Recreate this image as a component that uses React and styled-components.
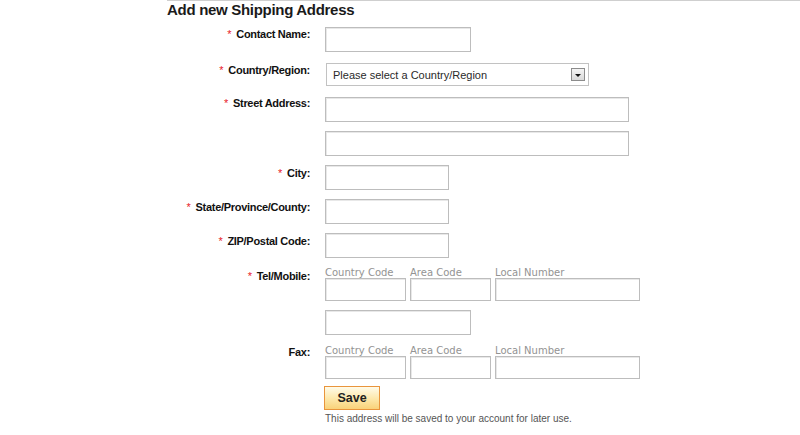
import React from 'react';
import styled, { createGlobalStyle } from 'styled-components';

const GlobalStyle = createGlobalStyle`
  body {
    margin: 0;
    background: #ffffff;
    font-family: "Liberation Sans", Arial, sans-serif;
  }
`;

const App = () => {
  return (
    <>
      <GlobalStyle />
      <Page>
        <Title>Add new Shipping Address</Title>
        <Form onSubmit={(e) => e.preventDefault()}>
          <Row $mt={8}>
            <Label><Star>*</Star>Contact Name:</Label>
            <Field>
              <TextInput $w={146} />
            </Field>
          </Row>

          <Row $mt={11}>
            <Label><Star>*</Star>Country/Region:</Label>
            <Field>
              <Select>
                <span>Please select a Country/Region</span>
                <Arrow />
              </Select>
            </Field>
          </Row>

          <Row $mt={11}>
            <Label $pt={0}><Star>*</Star>Street Address:</Label>
            <Field $gap={9}>
              <TextInput $w={304} />
              <TextInput $w={304} />
            </Field>
          </Row>

          <Row $mt={9}>
            <Label $pt={2}><Star>*</Star>City:</Label>
            <Field>
              <TextInput $w={124} />
            </Field>
          </Row>

          <Row $mt={9}>
            <Label $pt={2}><Star>*</Star>State/Province/County:</Label>
            <Field>
              <TextInput $w={124} />
            </Field>
          </Row>

          <Row $mt={9}>
            <Label $pt={2}><Star>*</Star>ZIP/Postal Code:</Label>
            <Field>
              <TextInput $w={124} />
            </Field>
          </Row>

          <Row $mt={10}>
            <Label $pt={2}><Star>*</Star>Tel/Mobile:</Label>
            <Field $gap={9}>
              <PhoneGroup>
                <PhonePart>
                  <SubLabel>Country Code</SubLabel>
                  <TextInput $w={81} $h={23} />
                </PhonePart>
                <PhonePart>
                  <SubLabel>Area Code</SubLabel>
                  <TextInput $w={81} $h={23} />
                </PhonePart>
                <PhonePart>
                  <SubLabel>Local Number</SubLabel>
                  <TextInput $w={145} $h={23} />
                </PhonePart>
              </PhoneGroup>
              <TextInput $w={146} />
            </Field>
          </Row>

          <Row $mt={11}>
            <Label $pt={0}>Fax:</Label>
            <Field>
              <PhoneGroup>
                <PhonePart>
                  <SubLabel>Country Code</SubLabel>
                  <TextInput $w={81} $h={23} />
                </PhonePart>
                <PhonePart>
                  <SubLabel>Area Code</SubLabel>
                  <TextInput $w={81} $h={23} />
                </PhonePart>
                <PhonePart>
                  <SubLabel>Local Number</SubLabel>
                  <TextInput $w={145} $h={23} />
                </PhonePart>
              </PhoneGroup>
            </Field>
          </Row>

          <Row $mt={7}>
            <span />
            <Field $gap={3}>
              <SaveButton type="submit">Save</SaveButton>
              <Note>This address will be saved to your account for later use.</Note>
            </Field>
          </Row>
        </Form>
      </Page>
    </>
  );
};

export default App;

// Styled-components
const Page = styled.div`
  margin-left: 167px;
  border-top: 1px solid #cfcfcf;
  color: #111;
`;

const Title = styled.h2`
  margin: 0;
  font-size: 15px;
  line-height: 18px;
  font-weight: bold;
  letter-spacing: -0.3px;
  color: #1a1a1a;
`;

const Form = styled.form`
  display: flex;
  flex-direction: column;
`;

const Row = styled.div`
  display: grid;
  grid-template-columns: 143px 1fr;
  column-gap: 15px;
  margin-top: ${(p) => p.$mt || 0}px;
`;

const Label = styled.div`
  text-align: right;
  font-size: 11px;
  line-height: 13px;
  font-weight: bold;
  letter-spacing: -0.3px;
  padding-top: ${(p) => (p.$pt ?? 1)}px;
  white-space: nowrap;
  color: #111;
`;

const Star = styled.span`
  color: #e8202a;
  font-weight: normal;
  margin-right: 5px;
`;

const Field = styled.div`
  display: flex;
  flex-direction: column;
  align-items: flex-start;
  gap: ${(p) => p.$gap || 0}px;
`;

const TextInput = styled.input`
  box-sizing: border-box;
  width: ${(p) => p.$w}px;
  height: ${(p) => p.$h || 25}px;
  margin: 0;
  padding: 0 4px;
  border: 1px solid #bdbdbd;
  box-shadow: inset 1px 1px 0 #e8e8e8;
  background: #fff;
  font-family: "Liberation Sans", Arial, sans-serif;
  font-size: 11px;
  outline: none;
`;

const Select = styled.div`
  box-sizing: border-box;
  width: 263px;
  height: 23px;
  margin-left: 1px;
  display: flex;
  align-items: center;
  justify-content: space-between;
  padding: 0 3px 0 6px;
  border: 1px solid #c2c2c2;
  background: #fff;
  font-size: 11px;
  color: #2a2a2a;
`;

const Arrow = styled.span`
  box-sizing: border-box;
  width: 14px;
  height: 13px;
  display: flex;
  align-items: center;
  justify-content: center;
  border: 1px solid #8c8c8c;
  background: linear-gradient(#f4f4f4, #d9d9d9);

  &::after {
    content: '';
    border-left: 3px solid transparent;
    border-right: 3px solid transparent;
    border-top: 3px solid #111;
    margin-top: 1px;
  }
`;

const PhoneGroup = styled.div`
  display: flex;
  gap: 4px;
`;

const PhonePart = styled.div`
  display: flex;
  flex-direction: column;
`;

const SubLabel = styled.span`
  font-family: "DejaVu Sans", Verdana, sans-serif;
  font-size: 10px;
  line-height: 10px;
  color: #939393;
`;

const SaveButton = styled.button`
  box-sizing: border-box;
  width: 56px;
  height: 24px;
  margin: 0 0 0 -1px;
  padding: 0;
  border: 1px solid #e9953c;
  background: linear-gradient(#fffbe9, #fde7a8 55%, #f9d27a);
  font-family: "Liberation Sans", Arial, sans-serif;
  font-size: 12.5px;
  font-weight: bold;
  color: #222;
  cursor: pointer;
`;

const Note = styled.p`
  margin: 0;
  font-size: 10px;
  line-height: 12px;
  color: #555;
`;
